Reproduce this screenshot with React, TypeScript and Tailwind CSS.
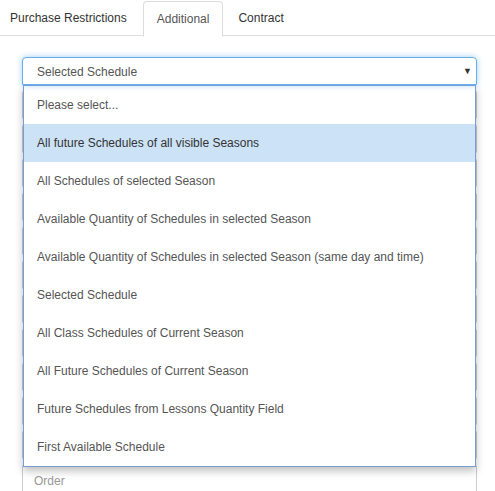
import { useState } from 'react';

const options = [
  'Please select...',
  'All future Schedules of all visible Seasons',
  'All Schedules of selected Season',
  'Available Quantity of Schedules in selected Season',
  'Available Quantity of Schedules in selected Season (same day and time)',
  'Selected Schedule',
  'All Class Schedules of Current Season',
  'All Future Schedules of Current Season',
  'Future Schedules from Lessons Quantity Field',
  'First Available Schedule',
];

const tabs = ['Purchase Restrictions', 'Additional', 'Contract'];

export default function App() {
  const [active] = useState(1);
  const [hovered] = useState(1);

  return (
    <div className="w-[495px] h-[491px] overflow-hidden bg-white text-[12px] text-[#555] font-['Liberation_Sans',Arial,sans-serif]">
      {/* tabs */}
      <div className="flex h-[36px] border-b border-[#ddd] pt-[1px]">
        {tabs.map((t, i) => (
          <div
            key={t}
            className={
              i === active
                ? 'ml-[2px] px-[13px] flex items-center border border-[#ddd] border-b-white rounded-t-[4px] bg-white text-[#555] -mb-[1px] h-[36px]'
                : i === 0
                  ? 'pl-[10px] pr-[14px] flex items-center text-[#333]'
                  : 'ml-[2px] px-[13px] flex items-center text-[#333]'
            }
          >
            {t}
          </div>
        ))}
      </div>

      {/* form panel */}
      <div className="relative ml-[22px] w-[455px] pt-[21px]">
        <div className="relative z-20 h-[28px] border border-[#66afe9] rounded-t-[4px] bg-white shadow-[0_0_6px_rgba(102,175,233,0.6)] flex items-center pl-[14px] pt-[1px] text-[#555]">
          Selected Schedule
          <span className="absolute right-[4px] top-[7px] text-[9px] text-[#333]">▼</span>
        </div>

        {/* fields behind the open list */}
        <div className="flex flex-col gap-[4px] mt-[5px]">
          {Array.from({ length: 11 }).map((_, i) => (
            <div key={i} className="h-[30px] border border-[#ccc] rounded-[3px] bg-white" />
          ))}
          <div className="h-[34px] border border-[#ccc] rounded-[3px] bg-white flex items-center pl-[11px] text-[#999]">
            Order
          </div>
        </div>

        {/* open option list */}
        <div className="absolute z-10 left-[1px] top-[49px] w-[453px] bg-white border border-[#7b9bd8] shadow-[0_4px_8px_rgba(0,0,0,0.25)]">
          {options.map((o, i) => (
            <div
              key={o}
              className={
                i === hovered
                  ? 'h-[38px] flex items-center pl-[13px] bg-[#cce2f7] text-[#333]'
                  : 'h-[38px] flex items-center pl-[13px] text-[#555]'
              }
            >
              {o}
            </div>
          ))}
        </div>
      </div>
    </div>
  );
}
